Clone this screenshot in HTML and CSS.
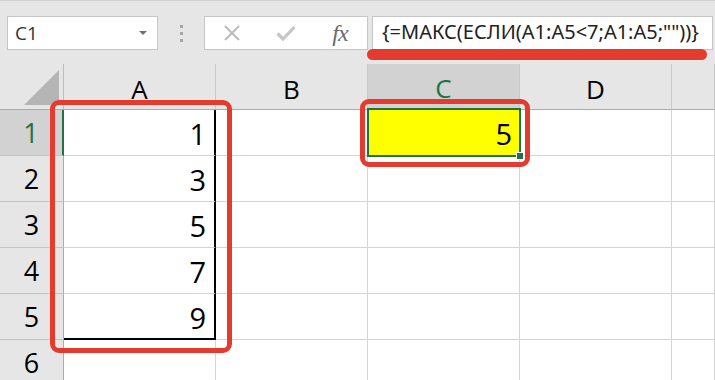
FILE: index.html
```html
<!DOCTYPE html>
<html lang="ru">
<head>
  <meta charset="UTF-8">
  <title>МАКС ЕСЛИ</title>
  <link rel="stylesheet" href="styles.css">
</head>
<body>
  <div class="toolbar">
    <div class="namebox">
      <span>C1</span>
      <span class="caret"></span>
    </div>
    <div class="grip"><i></i><i></i><i></i></div>
    <div class="fxbox">
      <span class="fx-btn">
        <svg width="18" height="16" viewBox="0 0 18 16"><path d="M2 1 L16 15 M16 1 L2 15" stroke="#bdbdbd" stroke-width="2.2" fill="none"/></svg>
      </span>
      <span class="fx-btn">
        <svg width="20" height="16" viewBox="0 0 20 16"><path d="M1.5 8.5 L7 14 L18.5 2" stroke="#c6c6c6" stroke-width="3.2" fill="none"/></svg>
      </span>
      <span class="fx-btn fx">fx</span>
    </div>
    <div class="formula">{=МАКС(ЕСЛИ(A1:A5&lt;7;A1:A5;""))}</div>
  </div>

  <div class="sheet">
    <div class="corner"></div>
    <div class="col-head">A</div>
    <div class="col-head">B</div>
    <div class="col-head active">C</div>
    <div class="col-head">D</div>
    <div class="col-head"></div>

    <div class="row-head active">1</div>
    <div class="cell edge">1</div>
    <div class="cell"></div>
    <div class="cell yellow">5</div>
    <div class="cell"></div>
    <div class="cell"></div>

    <div class="row-head">2</div>
    <div class="cell edge">3</div>
    <div class="cell"></div>
    <div class="cell"></div>
    <div class="cell"></div>
    <div class="cell"></div>

    <div class="row-head">3</div>
    <div class="cell edge">5</div>
    <div class="cell"></div>
    <div class="cell"></div>
    <div class="cell"></div>
    <div class="cell"></div>

    <div class="row-head">4</div>
    <div class="cell edge">7</div>
    <div class="cell"></div>
    <div class="cell"></div>
    <div class="cell"></div>
    <div class="cell"></div>

    <div class="row-head">5</div>
    <div class="cell edge last">9</div>
    <div class="cell"></div>
    <div class="cell"></div>
    <div class="cell"></div>
    <div class="cell"></div>

    <div class="row-head">6</div>
    <div class="cell"></div>
    <div class="cell"></div>
    <div class="cell"></div>
    <div class="cell"></div>
    <div class="cell"></div>
  </div>

  <!-- overlays: selection and red marks -->
  <div class="selection"></div>
  <div class="handle"></div>
  <div class="mark mark-a"></div>
  <div class="mark mark-c"></div>
  <div class="underline"></div>
</body>
</html>
```

FILE: styles.css
```css
body {
  margin: 0;
  position: relative;
  width: 715px;
  height: 380px;
  overflow: hidden;
  background: #ffffff;
  font-family: 'Open Sans', 'Noto Sans', sans-serif;
  color: #000;
}

.toolbar {
  display: flex;
  align-items: flex-start;
  height: 64px;
  box-sizing: border-box;
  padding: 16px 0 0 7px;
  background: #e6e6e6;
  border-top: 1px solid #d2d2d2;
}

.namebox {
  width: 151px;
  height: 34px;
  box-sizing: border-box;
  margin-top: -1px;
  background: #fff;
  border: 1px solid #c6c6c6;
  display: flex;
  align-items: center;
  justify-content: space-between;
  padding: 0 10px 0 7px;
  font-size: 19px;
  color: #333;
}

.caret {
  width: 0;
  height: 0;
  border-left: 4px solid transparent;
  border-right: 4px solid transparent;
  border-top: 4px solid #707070;
}

.grip {
  width: 46px;
  display: flex;
  flex-direction: column;
  align-items: center;
  gap: 4px;
  padding-top: 8px;
}

.grip i {
  width: 3px;
  height: 3px;
  background: #a6a6a6;
}

.fxbox {
  width: 164px;
  height: 34px;
  margin-top: -1px;
  box-sizing: border-box;
  background: #fff;
  border: 1px solid #c6c6c6;
  display: flex;
}

.fx-btn {
  width: 54px;
  height: 32px;
  display: flex;
  align-items: center;
  justify-content: center;
}

.fx {
  font-family: 'Liberation Serif', serif;
  font-style: italic;
  font-size: 24px;
  color: #6a6a6a;
  letter-spacing: -1px;
}

.formula {
  width: 341px;
  height: 34px;
  margin-top: -1px;
  margin-left: 4px;
  box-sizing: border-box;
  background: #fff;
  border: 1px solid #c6c6c6;
  padding-left: 9px;
  font-family: 'Noto Sans', sans-serif;
  font-size: 20px;
  line-height: 30px;
  white-space: nowrap;
  color: #222;
}

.sheet {
  display: grid;
  grid-template-columns: 64px 152px 152px 152px 152px 1fr;
  grid-template-rows: 46px;
  grid-auto-rows: 46px;
}

.corner {
  position: relative;
  background: #e6e6e6;
  border-right: 1px solid #bcbcbc;
  border-bottom: 1px solid #ababab;
}

.corner::after {
  content: '';
  position: absolute;
  right: 4px;
  bottom: 4px;
  width: 35px;
  height: 35px;
  background: #b5b5b5;
  clip-path: polygon(100% 0, 100% 100%, 0 100%);
}

.col-head {
  background: #e6e6e6;
  border-right: 1px solid #c8c8c8;
  border-bottom: 1px solid #ababab;
  display: flex;
  align-items: center;
  justify-content: center;
  font-size: 26px;
  padding-top: 4px;
  box-sizing: border-box;
}

.col-head.active {
  background: #d2d2d2;
  color: #217346;
  border-bottom: 2px solid #217346;
}

.row-head {
  background: #e6e6e6;
  border-right: 1px solid #ababab;
  border-bottom: 1px solid #c4c4c4;
  display: flex;
  align-items: center;
  justify-content: center;
  font-size: 27px;
  box-sizing: border-box;
}

.row-head.active {
  background: #d2d2d2;
  color: #217346;
  border-right: 2px solid #217346;
}

.cell {
  border-right: 1px solid #d4d4d4;
  border-bottom: 1px solid #d4d4d4;
  box-sizing: border-box;
  display: flex;
  align-items: center;
  justify-content: flex-end;
  padding: 2px 8px 0 0;
  font-size: 29px;
}

.cell.edge {
  border-right: 2px solid #000;
}

.cell.last {
  border-bottom: 2px solid #000;
}

.cell.yellow {
  background: #ffff00;
  padding-right: 7px;
}

.selection {
  position: absolute;
  left: 367px;
  top: 108px;
  width: 154px;
  height: 49px;
  box-sizing: border-box;
  border: 2px solid #217346;
}

.handle {
  position: absolute;
  left: 516px;
  top: 152px;
  width: 6px;
  height: 6px;
  background: #217346;
  border: 1px solid #fff;
}

.mark {
  position: absolute;
  box-sizing: border-box;
  border: 5px solid #e33b2e;
  border-radius: 9px;
}

.mark-a {
  left: 50px;
  top: 100px;
  width: 182px;
  height: 253px;
}

.mark-c {
  left: 360px;
  top: 99px;
  width: 170px;
  height: 68px;
}

.underline {
  position: absolute;
  left: 367px;
  top: 49px;
  width: 340px;
  height: 11px;
  border-radius: 6px;
  background: #e33b2e;
}
```
